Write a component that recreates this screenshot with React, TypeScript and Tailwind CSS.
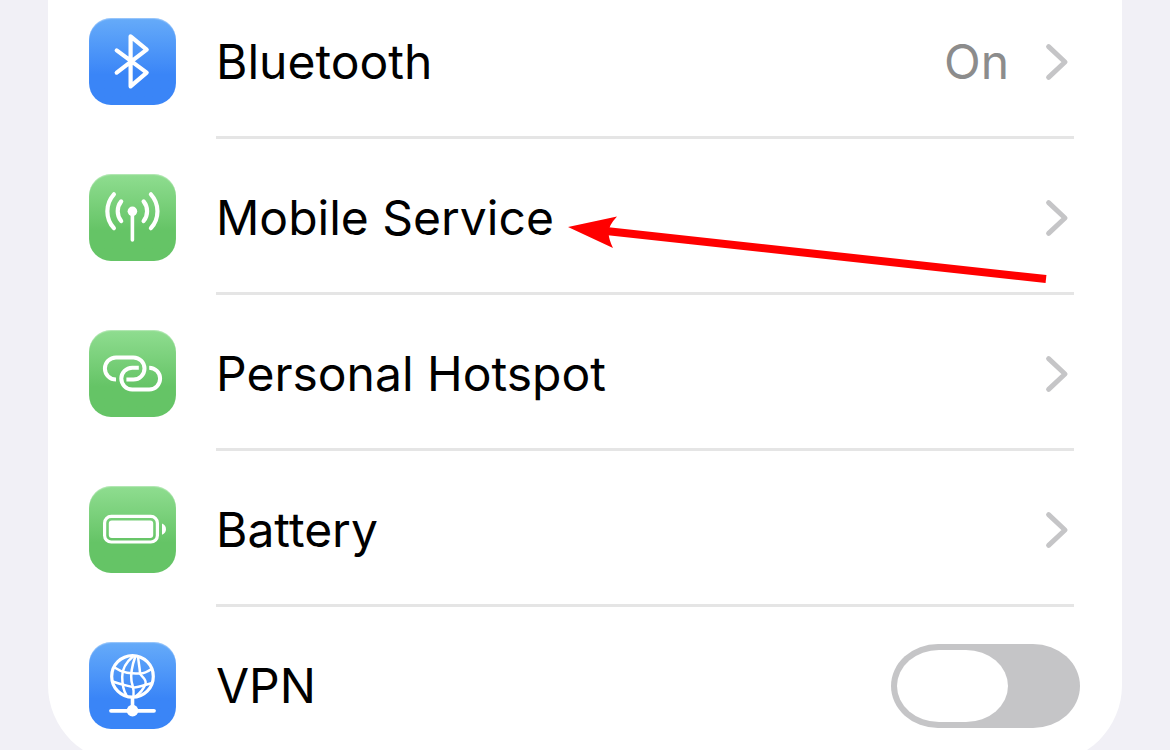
import type { ReactNode } from "react";

function BluetoothIcon() {
  return (
    <svg viewBox="0 0 87 87" className="size-full" fill="none" stroke="white" strokeWidth="4.2" strokeLinecap="round" strokeLinejoin="round" aria-hidden="true">
      <path d="M27.7 32.4 57.7 54.6 41.6 68.3V18.3L57.7 31.6 27.7 54.6" />
    </svg>
  );
}

function AntennaIcon() {
  return (
    <svg viewBox="0 0 87 87" className="size-full" fill="none" stroke="white" strokeLinecap="round" aria-hidden="true">
      <circle cx="43.4" cy="37.3" r="4.8" fill="white" stroke="none" />
      <path d="M43.4 38V66" strokeWidth="3.6" />
      <path d="M32.2 27.4A15.5 15.5 0 0 0 32.2 47M54.6 27.4A15.5 15.5 0 0 1 54.6 47" strokeWidth="4.2" />
      <path d="M24.9 20.3A25.2 25.2 0 0 0 24.9 54.2M61.9 20.3A25.2 25.2 0 0 1 61.9 54.2" strokeWidth="4.2" />
    </svg>
  );
}

function HotspotIcon() {
  return (
    <svg viewBox="0 0 87 87" className="size-full" fill="none" stroke="white" strokeWidth="4" aria-hidden="true">
      <path d="M27 49.6A11.1 11.1 0 0 1 27 27.4H44.4A11.1 11.1 0 0 1 44.4 49.6H37.4" />
      <path d="M49.8 37.7H43.2A10.9 10.9 0 0 0 43.2 59.5H60.2A10.9 10.9 0 0 0 60.2 37.7" />
    </svg>
  );
}

function BatteryIcon() {
  return (
    <svg viewBox="0 0 87 87" className="size-full" fill="white" aria-hidden="true">
      <rect x="15.6" y="30.4" width="52.8" height="25.6" rx="6.6" fill="none" stroke="white" strokeWidth="3.2" />
      <rect x="19.8" y="34.5" width="44.4" height="17.4" rx="3" />
      <path d="M73 37.6C78.3 39.2 78.3 47.2 73 48.8Z" />
    </svg>
  );
}

function VpnIcon() {
  return (
    <svg viewBox="0 0 87 87" className="size-full" fill="none" stroke="white" strokeWidth="2.5" aria-hidden="true">
      <circle cx="43.5" cy="34.4" r="20.8" strokeWidth="3.2" />
      <path d="M44.5 14C36 21 33 28 33.2 35 33.3 43 34 48 37.5 53.5" />
      <path d="M46.5 14C42.5 25 41.5 32 42.5 39 43 43 45.5 46 44.5 54.5" />
      <path d="M49 14C49.5 21 51 27 51 31.5" />
      <path d="M51 31.5C53 35.5 58 37 56.5 42 54.5 47 50 52 46.5 54.5" />
      <path d="M25.5 25.5C34 31.5 42 31.5 51 31.5 56 31.5 59 29.5 62.5 27" />
      <path d="M23.5 39.5C32 42.5 38 43.5 45 45.5 51 45 58 42 63.5 41" />
      <path d="M43.5 56V68" strokeWidth="3.6" />
      <path d="M22 68.8H65" strokeWidth="3.8" strokeLinecap="round" />
      <circle cx="43.5" cy="68.6" r="5.8" fill="white" stroke="none" />
    </svg>
  );
}

function Chevron() {
  return (
    <svg viewBox="0 0 24 38" className="h-[38px] w-6 shrink-0" fill="none" stroke="#c5c5c7" strokeWidth="5" strokeLinecap="round" strokeLinejoin="round" aria-hidden="true">
      <path d="M3.6 3.7 20 19 3.6 34.3" />
    </svg>
  );
}

function Tile({ color, children }: { color: "blue" | "green"; children: ReactNode }) {
  const fill =
    color === "blue"
      ? "bg-linear-to-b from-[#66abf9] to-[#3a85f7] to-65%"
      : "bg-linear-to-b from-[#8fdd90] to-[#65c466] to-65%";
  return (
    <span className={`size-[87px] shrink-0 rounded-[22px] shadow-[inset_0_1px_1px_rgba(255,255,255,0.35)] ${fill}`}>
      {children}
    </span>
  );
}

const links: { label: string; value?: string; color: "blue" | "green"; icon: ReactNode }[] = [
  { label: "Bluetooth", value: "On", color: "blue", icon: <BluetoothIcon /> },
  { label: "Mobile Service", color: "green", icon: <AntennaIcon /> },
  { label: "Personal Hotspot", color: "green", icon: <HotspotIcon /> },
  { label: "Battery", color: "green", icon: <BatteryIcon /> },
];

export default function App() {
  return (
    <main className="h-screen overflow-hidden bg-[#f1f0f6] px-12 font-['Inter',sans-serif] text-[48px] leading-[60px] text-black">
      <div className="relative rounded-b-[78px] bg-white pb-[34px] pl-[41px]">
        <ul>
          {links.map((item) => (
            <li key={item.label} className="group">
              <a href="#" className="flex gap-10">
                <span className="flex pt-[35px] pb-[34px] group-first:pt-[18px]">
                  <Tile color={item.color}>{item.icon}</Tile>
                </span>
                <span className="mr-12 flex flex-1 items-center border-b-[3px] border-[#e5e5e5] pt-[35px] pr-[5px] pb-[31px] group-first:pt-[18px]">
                  <span className="flex-1">{item.label}</span>
                  {item.value && <span className="mr-9 text-[#8c8c8c]">{item.value}</span>}
                  <Chevron />
                </span>
              </a>
            </li>
          ))}
          <li>
            <label className="flex items-center gap-10 pt-[35px] pr-[42px]">
              <Tile color="blue">
                <VpnIcon />
              </Tile>
              <span className="flex-1">VPN</span>
              <input
                type="checkbox"
                role="switch"
                className="flex h-[84px] w-[189px] appearance-none items-center rounded-[47px/42px] bg-[#c5c5c7] p-1.5 before:h-[72px] before:w-[111px] before:rounded-[42px/36px] before:bg-white before:content-[''] checked:justify-end checked:bg-[#65c466]"
              />
            </label>
          </li>
        </ul>
        <svg viewBox="0 0 480 70" className="pointer-events-none absolute top-[215px] left-[520px] h-[70px] w-[480px]" aria-hidden="true">
          <path d="M38 16 478 64" stroke="#ff0000" strokeWidth="8" />
          <path d="M0 12 49 1.5Q40 11 40.5 18 41 25 45 33Z" fill="#ff0000" />
        </svg>
      </div>
    </main>
  );
}
